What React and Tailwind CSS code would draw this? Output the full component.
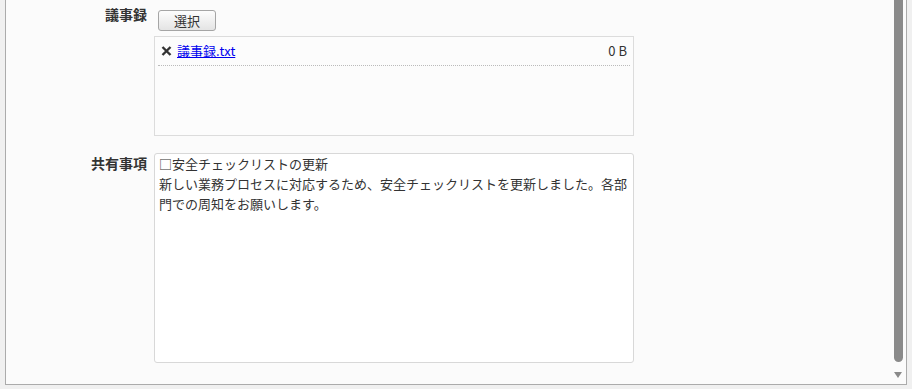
export default function App() {
  const font = { fontFamily: '"Noto Sans CJK JP", "Liberation Sans", sans-serif' };
  return (
    <div className="w-[912px] h-[389px] bg-[#f0f0f0] overflow-hidden text-[#333]" style={font}>
      <div className="ml-[5px] w-[902px] h-[385px] border-l border-r border-b border-[#ababab] bg-[#fbfbfb] flex">
        <div className="flex-1 pt-[5px]">
          {/* Row 1 */}
          <div className="flex items-start">
            <div className="w-[141px] pr-0 text-right text-[14px] leading-[18px] font-bold">議事録</div>
            <div className="ml-[7px] pt-[5px]">
              <button className="ml-[4px] w-[58px] h-[21px] rounded-[3px] border border-[#a5a5a5] bg-gradient-to-b from-[#fdfdfd] to-[#e4e4e4] text-[13px] leading-[19px] text-[#333] flex items-center justify-center">
                選択
              </button>
              <div className="mt-[5px] w-[480px] h-[100px] border border-[#dcdcdc] bg-[#fcfcfc]">
                <div className="mx-[3px] h-[29px] border-b border-dotted border-[#bbbbbb] flex items-center pl-[3px] pr-[3px] text-[13px]">
                  <svg width="11" height="10" viewBox="0 0 11 10" className="shrink-0">
                    <path d="M1.5 1 L9.5 9 M9.5 1 L1.5 9" stroke="#333" strokeWidth="2.4" strokeLinecap="butt" />
                  </svg>
                  <a href="#" className="ml-[5px] text-[#0000ee] underline leading-[18px]">議事録.txt</a>
                  <span className="ml-auto leading-[18px]">0 B</span>
                </div>
              </div>
            </div>
          </div>
          {/* Row 2 */}
          <div className="flex items-start mt-[17px]">
            <div className="w-[141px] text-right text-[14px] leading-[18px] font-bold pt-px">共有事項</div>
            <div className="ml-[7px] w-[480px] h-[210px] border border-[#d8d8d8] rounded-[3px] bg-white px-[4px] text-[13px] leading-[20px] whitespace-pre-wrap">
              {"□安全チェックリストの更新\n新しい業務プロセスに対応するため、安全チェックリストを更新しました。各部門での周知をお願いします。"}
            </div>
          </div>
        </div>
        {/* Scrollbar */}
        <div className="w-[13px] flex flex-col">
          <div className="ml-[1px] w-[9px] h-[362px] bg-[#8a8a8a] rounded-b-[5px]"></div>
          <div className="ml-[1px] mt-[10px] w-0 h-0 border-l-[4.5px] border-r-[4.5px] border-t-[6px] border-l-transparent border-r-transparent border-t-[#8a8a8a]"></div>
        </div>
      </div>
    </div>
  );
}
